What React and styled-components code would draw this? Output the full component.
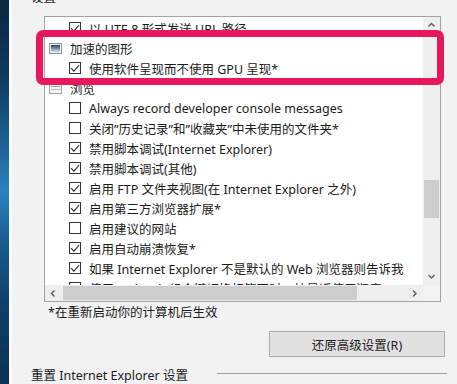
import React from "react";
import styled, { createGlobalStyle } from "styled-components";

const GlobalStyle = createGlobalStyle`
  html, body {
    margin: 0;
    padding: 0;
    background: #f0f0f0;
  }
  body {
    font-family: "Noto Sans", "Noto Sans CJK SC", sans-serif;
    font-size: 12.5px;
    color: #1b1b1b;
  }
`;

const rows = [
  { type: "check", checked: true, label: "以 UTF-8 形式发送 URL 路径" },
  { type: "group", icon: "graphics", label: "加速的图形" },
  { type: "check", checked: true, label: "使用软件呈现而不使用 GPU 呈现*" },
  { type: "group", icon: "browse", label: "浏览" },
  { type: "check", checked: false, label: "Always record developer console messages" },
  { type: "check", checked: false, label: "关闭\u201d历史记录\u201d和\u201d收藏夹\u201d中未使用的文件夹*" },
  { type: "check", checked: true, label: "禁用脚本调试(Internet Explorer)" },
  { type: "check", checked: true, label: "禁用脚本调试(其他)" },
  { type: "check", checked: true, label: "启用 FTP 文件夹视图(在 Internet Explorer 之外)" },
  { type: "check", checked: true, label: "启用第三方浏览器扩展*" },
  { type: "check", checked: false, label: "启用建议的网站" },
  { type: "check", checked: true, label: "启用自动崩溃恢复*" },
  { type: "check", checked: true, label: "如果 Internet Explorer 不是默认的 Web 浏览器则告诉我" },
  { type: "check", checked: false, label: "使用 Ctrl+Tab 组合键切换标签页时，按最近使用顺序" },
];

const Checkbox = ({ checked }) => (
  <CheckBox>
    {checked && (
      <svg width="10" height="10" viewBox="0 0 10 10">
        <polyline points="1,5.2 3.9,8.1 9.2,2" fill="none" stroke="#2b2b2b" strokeWidth="1.1" />
      </svg>
    )}
  </CheckBox>
);

const GroupIcon = ({ kind }) =>
  kind === "graphics" ? (
    <svg width="13" height="11" viewBox="0 0 13 11">
      <defs>
        <linearGradient id="pic" x1="0" y1="0" x2="0" y2="1">
          <stop offset="0" stopColor="#2f4258" />
          <stop offset="0.55" stopColor="#7f97ae" />
          <stop offset="1" stopColor="#d7e2ec" />
        </linearGradient>
      </defs>
      <rect x="0.5" y="0.5" width="12" height="10" fill="#e9eef2" stroke="#8a96a3" />
      <rect x="2" y="2" width="9" height="7" fill="url(#pic)" />
    </svg>
  ) : (
    <svg width="13" height="11" viewBox="0 0 13 11">
      <rect x="0.5" y="0.5" width="12" height="10" fill="#f4f4f4" stroke="#9aa3ad" />
      <line x1="2" y1="3.5" x2="11" y2="3.5" stroke="#9aa3ad" />
      <line x1="2" y1="6.5" x2="11" y2="6.5" stroke="#b5bcc4" />
    </svg>
  );

const Chevron = ({ dir }) => {
  const paths = {
    up: "M1.5 5.5 L4.5 2.5 L7.5 5.5",
    down: "M1.5 3 L4.5 6 L7.5 3",
    left: "M5.5 1.5 L2.5 4.5 L5.5 7.5",
    right: "M3 1.5 L6 4.5 L3 7.5",
  };
  return (
    <svg width="9" height="9" viewBox="0 0 9 9">
      <path d={paths[dir]} fill="none" stroke="#606060" strokeWidth="1.5" />
    </svg>
  );
};

export default function App() {
  return (
    <>
      <GlobalStyle />
      <Page>
        <Desktop />
        <Dialog>
          <Legend>设置</Legend>
          <ListBox>
            <Viewport>
              <Rows>
                {rows.map((r, i) =>
                  r.type === "group" ? (
                    <GroupRow key={i}>
                      <GroupIcon kind={r.icon} />
                      <span>{r.label}</span>
                    </GroupRow>
                  ) : (
                    <CheckRow key={i}>
                      <Checkbox checked={r.checked} />
                      <span>{r.label}</span>
                    </CheckRow>
                  )
                )}
              </Rows>
            </Viewport>
            <VScroll>
              <ArrowBtn $h="17px">
                <Chevron dir="up" />
              </ArrowBtn>
              <VTrack>
                <VThumb $offset={146} />
              </VTrack>
              <ArrowBtn $h="17px">
                <Chevron dir="down" />
              </ArrowBtn>
            </VScroll>
            <HScroll>
              <ArrowBtn $w="17px">
                <Chevron dir="left" />
              </ArrowBtn>
              <HTrack>
                <HThumb />
              </HTrack>
              <ArrowBtn $w="17px">
                <Chevron dir="right" />
              </ArrowBtn>
            </HScroll>
            <Corner />
          </ListBox>
          <Note>*在重新启动你的计算机后生效</Note>
          <ButtonRow>
            <Button>还原高级设置(R)</Button>
          </ButtonRow>
          <ResetRow>
            <span>重置 Internet Explorer 设置</span>
            <Rule />
          </ResetRow>
        </Dialog>
        <Highlight />
      </Page>
    </>
  );
}

const Page = styled.div`
  position: relative;
  display: flex;
  width: 457px;
  height: 384px;
  overflow: hidden;
`;

const Desktop = styled.div`
  width: 9px;
  flex-shrink: 0;
  background: linear-gradient(
    180deg,
    #0b2640 0%,
    #0e3a5e 20%,
    #1d6396 38%,
    #2b83c2 50%,
    #1a5e92 62%,
    #0f426b 78%,
    #0b3154 100%
  );
`;

const Dialog = styled.div`
  flex: 1;
  display: flex;
  flex-direction: column;
  background: #f2f2f2;
  border-left: 3px solid #f9fafb;
  min-width: 0;
`;

const Legend = styled.div`
  line-height: 16px;
  margin: -10px 0 0 19px;
`;

const ListBox = styled.div`
  margin: 10px 0 0 32px;
  width: 397px;
  height: 286px;
  box-sizing: border-box;
  border: 1px solid #a3a3a3;
  background: #fff;
  display: grid;
  grid-template-columns: 1fr 17px;
  grid-template-rows: 1fr 16px;
`;

const Viewport = styled.div`
  background: #fff;
  padding-top: 4px;
  overflow: hidden;
  display: flex;
  flex-direction: column;
`;

const Rows = styled.div`
  margin-top: -3px;
  display: flex;
  flex-direction: column;
`;

const CheckRow = styled.div`
  height: 20px;
  display: flex;
  align-items: center;
  gap: 8px;
  padding-left: 24px;
  white-space: nowrap;
`;

const GroupRow = styled(CheckRow)`
  padding-left: 4px;
  gap: 8px;
`;

const CheckBox = styled.span`
  width: 12px;
  height: 12px;
  box-sizing: border-box;
  border: 1px solid #333;
  background: #fff;
  display: flex;
  align-items: center;
  justify-content: center;
  flex-shrink: 0;
`;

const VScroll = styled.div`
  background: #efefef;
  display: flex;
  flex-direction: column;
`;

const ArrowBtn = styled.div`
  height: ${(p) => p.$h || "auto"};
  width: ${(p) => p.$w || "auto"};
  flex-shrink: 0;
  display: flex;
  align-items: center;
  justify-content: center;
`;

const VTrack = styled.div`
  flex: 1;
  display: flex;
  flex-direction: column;
  align-items: center;
`;

const VThumb = styled.div`
  margin-top: ${(p) => p.$offset}px;
  width: 15px;
  height: 38px;
  background: #cdcdcd;
`;

const HScroll = styled.div`
  background: #efefef;
  display: flex;
`;

const HTrack = styled.div`
  flex: 1;
  display: flex;
  align-items: center;
  padding-left: 1px;
`;

const HThumb = styled.div`
  width: 294px;
  height: 14px;
  background: #cdcdcd;
`;

const Corner = styled.div`
  background: #f3f3f3;
`;

const Note = styled.div`
  line-height: 16px;
  margin: 3px 0 0 36px;
`;

const ButtonRow = styled.div`
  display: flex;
  margin: 10px 0 0 257px;
`;

const Button = styled.button`
  width: 176px;
  height: 26px;
  border: 1px solid #adadad;
  background: #e1e1e1;
  font: inherit;
  color: #1b1b1b;
  padding: 0;
`;

const ResetRow = styled.div`
  display: flex;
  align-items: center;
  line-height: 16px;
  margin: 11px 0 0 19px;
  white-space: nowrap;
`;

const Rule = styled.div`
  margin-left: auto;
  margin-right: 10px;
  width: 230px;
  height: 1px;
  background: #a0a0a0;
  margin-top: -6px;
`;

const Highlight = styled.div`
  position: absolute;
  left: 36px;
  top: 30px;
  width: 408px;
  height: 55px;
  box-sizing: border-box;
  border: 7px solid #e8185c;
  border-radius: 7px;
  pointer-events: none;
`;
